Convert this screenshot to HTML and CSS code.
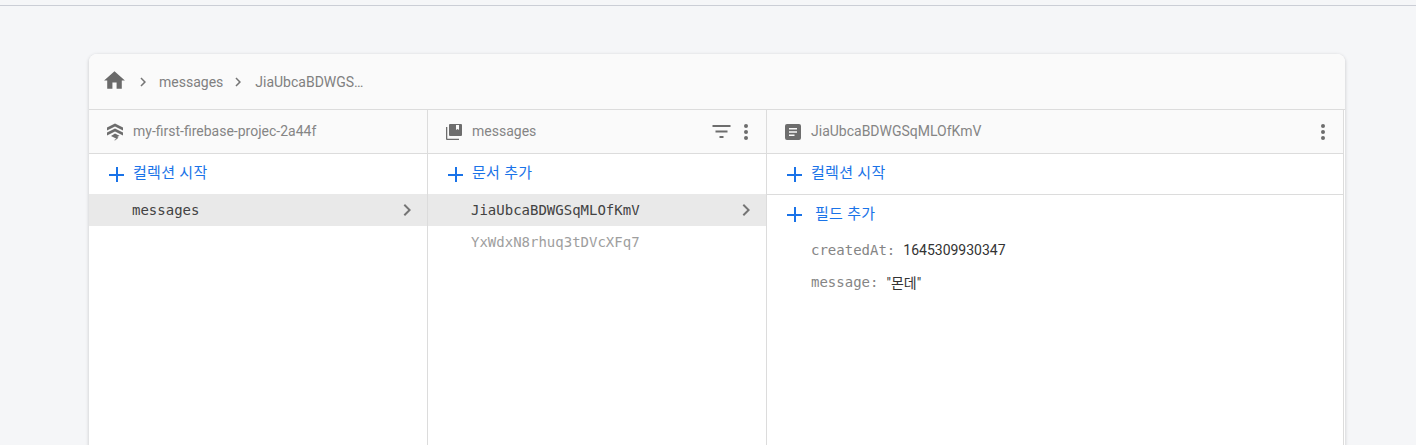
FILE: index.html
```html
<!DOCTYPE html>
<html lang="ko">
<head>
<meta charset="utf-8">
<title>Firestore</title>
<link rel="stylesheet" href="styles.css">
</head>
<body>
<div class="topline"></div>
<main class="card">
  <nav class="crumbs">
    <svg class="home" viewBox="0 0 24 24" width="25" height="25"><path d="M10 20v-6h4v6h5v-8h3L12 3 2 12h3v8z"/></svg>
    <svg class="chev first" viewBox="0 0 24 24" width="18" height="18"><path d="M8.600 16.600 13.200 12 8.600 7.400 10 6l6 6-6 6z"/></svg>
    <span class="crumb">messages</span>
    <svg class="chev" viewBox="0 0 24 24" width="18" height="18"><path d="M8.600 16.600 13.200 12 8.600 7.400 10 6l6 6-6 6z"/></svg>
    <span class="crumb">JiaUbcaBDWGS…</span>
  </nav>
  <div class="cols">
    <section class="col col-a">
      <header class="head">
        <svg class="ico" viewBox="0 0 18 18" width="18" height="18"><path d="M9 0.500 17 4.500V7.500L9 3.500 1 7.500V4.500zM9 5.500 17 9.500V12.500L9 8.500 1 12.500V9.500zM9 10.500l4.500 2.300-2.300 1.200 1.300.8L9 17.500l-.8-.5 2.300-1.300L9 15 5 13z"/></svg>
        <span class="title">my-first-firebase-projec-2a44f</span>
      </header>
      <div class="add"><span class="plus"></span><span class="add-t">컬렉션 시작</span></div>
      <div class="row sel"><span class="mono">messages</span><svg class="chev end" viewBox="0 0 24 24" width="24" height="24"><path d="M8.600 16.600 13.200 12 8.600 7.400 10 6l6 6-6 6z"/></svg></div>
    </section>
    <section class="col col-b">
      <header class="head">
        <svg class="ico" viewBox="0 0 18 18" width="18" height="18"><path d="M5 1h11a1 1 0 0 1 1 1v10a1 1 0 0 1-1 1H5a1 1 0 0 1-1-1V2a1 1 0 0 1 1-1zm6 1v5l1.500-1 1.500 1V2z" fill-rule="evenodd"/><path d="M1 4h1.300v11.700H14V17H2a1 1 0 0 1-1-1z"/></svg>
        <span class="title">messages</span>
        <svg class="filter" viewBox="0 0 18 13" width="19" height="13"><path d="M0 0h18v2H0zM3 5.500h12v2H3zM7 11h4v2H7z"/></svg>
        <svg class="dots" viewBox="0 0 4 16" width="4" height="16"><circle cx="2" cy="2" r="2"/><circle cx="2" cy="8" r="2"/><circle cx="2" cy="14" r="2"/></svg>
      </header>
      <div class="add"><span class="plus"></span><span class="add-t">문서 추가</span></div>
      <div class="row sel"><span class="mono">JiaUbcaBDWGSqMLOfKmV</span><svg class="chev end" viewBox="0 0 24 24" width="24" height="24"><path d="M8.600 16.600 13.200 12 8.600 7.400 10 6l6 6-6 6z"/></svg></div>
      <div class="row"><span class="mono dim">YxWdxN8rhuq3tDVcXFq7</span></div>
    </section>
    <section class="col col-c">
      <header class="head">
        <svg class="ico" viewBox="0 0 18 18" width="18" height="18"><path fill-rule="evenodd" d="M3 1h12a2 2 0 0 1 2 2v12a2 2 0 0 1-2 2H3a2 2 0 0 1-2-2V3a2 2 0 0 1 2-2zm2 4v1.500h8V5zm0 3.200v1.500h8V8.200zm0 3.200v1.500h5.500v-1.500z"/></svg>
        <span class="title">JiaUbcaBDWGSqMLOfKmV</span>
        <svg class="dots" viewBox="0 0 4 16" width="4" height="16"><circle cx="2" cy="2" r="2"/><circle cx="2" cy="8" r="2"/><circle cx="2" cy="14" r="2"/></svg>
      </header>
      <div class="add ruled"><span class="plus"></span><span class="add-t">컬렉션 시작</span></div>
      <div class="add field"><span class="plus"></span><span class="add-t">필드 추가</span></div>
      <div class="kv"><span class="mono dim">createdAt:</span><span class="val">1645309930347</span></div>
      <div class="kv"><span class="mono dim">message:</span><span class="val">"몬데"</span></div>
    </section>
  </div>
</main>
</body>
</html>
```

FILE: styles.css
```css
* { box-sizing: border-box; }
html, body { margin: 0; height: 445px; overflow: hidden; }
body {
  background: #f5f6f8;
  font-family: Roboto, "Noto Sans CJK KR", sans-serif;
  padding-top: 5px;
}
.topline { height: 1px; background: #cbced6; }
.card {
  width: 1256px;
  height: 391px;
  margin: 48px 0 0 89px;
  background: #fff;
  border-radius: 8px 8px 0 0;
  box-shadow: 0 1px 3px 1px rgba(60, 64, 67, .16);
  overflow: hidden;
}
.crumbs {
  height: 56px;
  display: flex;
  align-items: center;
  padding: 0 0 0 13px;
  background: #fafafa;
  border-bottom: 1px solid #dcdcdc;
  color: #808080;
  font-size: 14px;
}
.home { fill: #6a6a6a; margin-top: -3px; }
.chev { fill: #757575; }
.chev.first { margin: 0 0 0 7px; }
.crumb { margin-left: 7px; margin-right: 6px; }
.chev + .crumb + .chev + .crumb { margin-left: 8px; }
.cols { display: flex; height: 335px; }
.col { flex: none; border-right: 1px solid #dcdcdc; }
.col-a { width: 339px; }
.col-b { width: 339px; }
.col-c { width: 577px; }
.head {
  height: 44px;
  display: flex;
  align-items: center;
  padding: 0 0 0 17px;
  background: #fafafa;
  border-bottom: 1px solid #dcdcdc;
}
.ico { fill: #6d6d6d; flex: none; }
.title { margin: -2px 0 0 9px; color: #858585; font-size: 14px; flex: 1; white-space: nowrap; }
.filter { fill: #6d6d6d; margin-right: 13px; }
.dots { fill: #6d6d6d; margin-right: 18px; }
.add {
  height: 40px;
  display: flex;
  align-items: center;
  padding-left: 20px;
  color: #1a73e8;
  font-size: 15px;
}
.ruled { height: 41px; border-bottom: 1px solid #dcdcdc; }
.plus {
  width: 15px;
  height: 15px;
  flex: none;
  margin-top: 1px;
  background:
    linear-gradient(#1a73e8, #1a73e8) center / 15px 2px no-repeat,
    linear-gradient(#1a73e8, #1a73e8) center / 2px 15px no-repeat;
}
.add-t { margin: -6px 0 0 9px; letter-spacing: .3px; }
.col-c .field .add-t { margin: -4px 0 0 13px; }
.field { height: 38px; }
.row {
  height: 32px;
  display: flex;
  align-items: center;
  justify-content: space-between;
  padding-left: 43px;
}
.sel { background: #e9e9e9; }
.mono { font-family: "DejaVu Sans Mono", monospace; font-size: 14px; color: #424242; }
.dim { color: #9e9e9e; }
.end { margin-right: 8px; }
.kv { height: 33px; display: flex; align-items: center; padding-left: 44px; }
.kv .mono { color: #858585; }
.kv + .kv .mono, .kv + .kv .val { margin-top: -2px; }
.val { margin-left: 8px; font-size: 14px; color: #333; }
```
